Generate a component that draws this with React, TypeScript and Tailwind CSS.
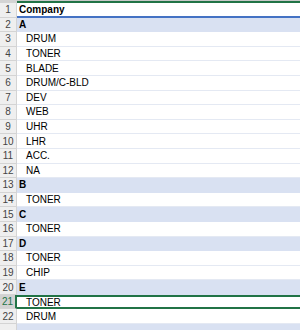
import React from 'react';

type Row = { label: string; group?: boolean; header?: boolean };

const rows: Row[] = [
  { label: 'Company', header: true },
  { label: 'A', group: true },
  { label: 'DRUM' },
  { label: 'TONER' },
  { label: 'BLADE' },
  { label: 'DRUM/C-BLD' },
  { label: 'DEV' },
  { label: 'WEB' },
  { label: 'UHR' },
  { label: 'LHR' },
  { label: 'ACC.' },
  { label: 'NA' },
  { label: 'B', group: true },
  { label: 'TONER' },
  { label: 'C', group: true },
  { label: 'TONER' },
  { label: 'D', group: true },
  { label: 'TONER' },
  { label: 'CHIP' },
  { label: 'E', group: true },
  { label: 'TONER' },
  { label: 'DRUM' },
  { label: '', group: true },
];

const SELECTED = 21;

const App = () => {
  return (
    <div className="w-[300px] h-[330px] overflow-hidden bg-white font-['Liberation_Sans',Arial,sans-serif] text-[10px] text-black">
      {/* column header strip */}
      <div className="flex h-[3px]">
        <div className="w-[17px] bg-[#d4d4d4]" />
        <div className="flex-1 border-t border-[#c8c8c8] border-b-2 border-b-[#217346]" />
      </div>
      {rows.map((row, i) => {
        const n = i + 1;
        const selected = n === SELECTED;
        // last row is only partly visible, its number is hidden
        const showNum = n < rows.length;
        return (
          <div key={n} className="flex h-[14.6px]">
            <div
              className={
                selected
                  ? 'w-[17px] shrink-0 flex items-center justify-center bg-[#d2d2d2] text-[#217346] border-r-2 border-r-[#217346] border-b border-b-[#d4d4d4]'
                  : 'w-[17px] shrink-0 flex items-center justify-center bg-[#efefef] text-[#444] border-r border-r-[#d4d4d4] border-b border-b-[#d4d4d4]'
              }
            >
              {showNum ? n : ''}
            </div>
            <div
              className={
                row.header
                  ? 'flex-1 flex items-center pl-[2px] font-bold border-b-2 border-b-[#4472c4] bg-white'
                  : row.group
                  ? 'flex-1 flex items-center pl-[2px] font-bold bg-[#d9e1f2] border-b border-b-[#d9e1f2]'
                  : selected
                  ? 'flex-1 flex items-center pl-[9px] border-y-2 border-[#217346] bg-white'
                  : 'flex-1 flex items-center pl-[9px] bg-white border-b border-b-[#e4e9f3]'
              }
            >
              {row.label}
            </div>
          </div>
        );
      })}
    </div>
  );
};

export default App;
